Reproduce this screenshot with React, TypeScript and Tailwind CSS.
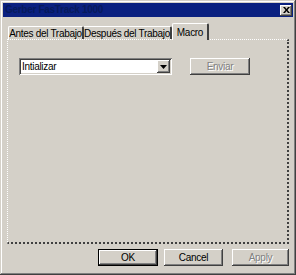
import React from "react";

const raised =
  "shadow-[inset_-1px_-1px_#404040,inset_1px_1px_#ffffff,inset_-2px_-2px_#808080,inset_2px_2px_#d4d0c8]";

function TitleBar() {
  return (
    <div className="shrink-0 h-[14px] flex flex-row items-center justify-between pl-[1px] border border-[#0a2080] bg-[#0a2080] bg-[linear-gradient(#0a2080,#0a2080)]">
      <span className="text-[10px] font-bold leading-none tracking-[-0.3px] text-[#061a5c]">
        Gerber FasTrack 1000
      </span>
      <div className={`w-[12px] h-[11px] bg-[#d4d0c8] flex items-center justify-center ${raised}`}>
        <svg width="7" height="6" viewBox="0 0 7 6">
          <path d="M0 0h2l1.5 2L5 0h2L4.5 3L7 6H5L3.5 4L2 6H0l2.5-3z" fill="#000" />
        </svg>
      </div>
    </div>
  );
}

export default function App() {
  return (
    <div
      className="w-[296px] h-[275px] bg-[#d4d0c8] flex flex-col p-[3px] shadow-[inset_-1px_-1px_#404040,inset_1px_1px_#d4d0c8,inset_-2px_-2px_#808080,inset_2px_2px_#ffffff] text-black whitespace-nowrap"
      style={{ fontFamily: '"Liberation Sans", Arial, sans-serif' }}
    >
      <TitleBar />

      <div className="shrink-0 mt-[6px] ml-[5px] flex items-end h-[16px] text-[10px] tracking-[-0.3px] relative z-10">
        <div className="w-[76px] h-[13px] border-l border-t border-white border-r-2 border-r-[#404040] rounded-tl-[2px] rounded-tr-[2px] flex items-center justify-center leading-none pt-[1px]">
          Antes del Trabajo
        </div>
        <div className="w-[88px] h-[13px] border-t border-white border-r-2 border-r-[#404040] rounded-tr-[2px] flex items-center justify-center leading-none pt-[1px]">
          Después del Trabajo
        </div>
        <div className="w-[37px] h-[17px] -mb-[1px] bg-[#d4d0c8] border-l border-t border-white border-r-2 border-r-[#404040] rounded-tl-[2px] rounded-tr-[2px] flex items-start justify-center leading-none pt-[4px]">
          Macro
        </div>
      </div>

      <div className="shrink-0 mx-[4px] h-[205px] border-l border-t border-dotted border-white border-r-2 border-b-2 border-r-[#404040] border-b-[#404040] pl-[11px] pt-[18px] flex items-start gap-[18px]">
        <div className="w-[153px] h-[17px] bg-white flex items-center justify-between pl-[3px] pr-[2px] shadow-[inset_1px_1px_#808080,inset_-1px_-1px_#ffffff,inset_2px_2px_#404040,inset_-2px_-2px_#d4d0c8]">
          <span className="text-[10px] leading-none tracking-[-0.3px]">Intializar</span>
          <div className={`w-[13px] h-[13px] bg-[#d4d0c8] flex items-center justify-center ${raised}`}>
            <svg width="7" height="4" viewBox="0 0 7 4">
              <polygon points="0,0 7,0 3.5,4" fill="#000" />
            </svg>
          </div>
        </div>
        <div
          className={`w-[60px] h-[17px] flex items-center justify-center text-[10px] leading-none tracking-[-0.3px] text-[#808080] [text-shadow:1px_1px_#ffffff] ${raised}`}
        >
          Enviar
        </div>
      </div>

      <div className="shrink-0 mt-[5px] mr-[4px] flex justify-end gap-[6px] text-[10px] leading-none tracking-[-0.3px]">
        <div className="w-[60px] h-[17px] border border-black flex">
          <div className={`flex-1 flex items-center justify-center ${raised}`}>OK</div>
        </div>
        <div className={`w-[59px] h-[17px] flex items-center justify-center ${raised}`}>Cancel</div>
        <div
          className={`w-[57px] h-[17px] ml-[3px] flex items-center justify-center text-[#808080] [text-shadow:1px_1px_#ffffff] ${raised}`}
        >
          Apply
        </div>
      </div>
    </div>
  );
}
